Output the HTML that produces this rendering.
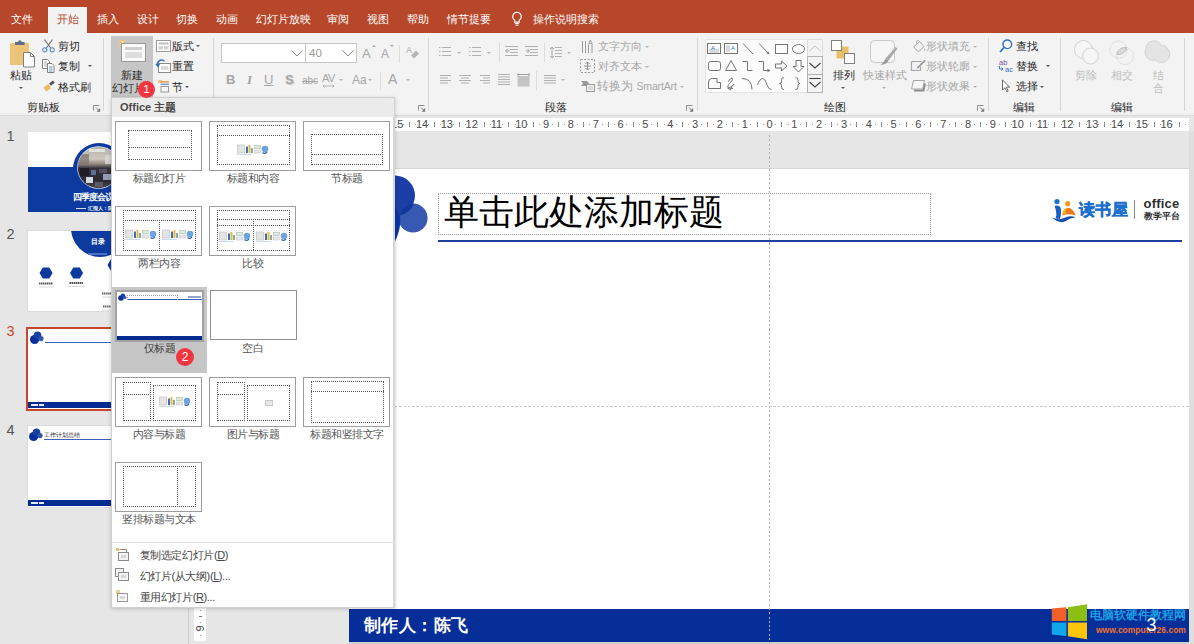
<!DOCTYPE html>
<html><head><meta charset="utf-8">
<style>
*{margin:0;padding:0;box-sizing:border-box}
html,body{width:1194px;height:644px;overflow:hidden;background:#e6e6e6}
body{position:relative;font-family:"Liberation Sans",sans-serif;font-size:11px;color:#262626}
.a{position:absolute}
.t{position:absolute;white-space:nowrap;font-size:11px;line-height:14px;height:14px;overflow:visible}
.j{text-align:justify;text-align-last:justify;text-justify:inter-character}
.g{color:#a6a6a6}
.w{color:#fff}
.sep{position:absolute;top:38px;height:73px;width:1px;background:#d6d6d6}
svg{position:absolute;overflow:visible}
.lb{position:absolute;white-space:nowrap;letter-spacing:-.6px;font-size:10.500px;line-height:14px;color:#444;text-align:center;width:96px}
.th{position:absolute;width:87px;height:50px;background:#fff;border:1px solid #a8a8a8}
.dz{position:absolute;border:1px dotted #555}
</style></head><body>
<!-- TITLE BAR -->
<div class="a" id="titlebar" style="left:0;top:0;width:1194px;height:33px;background:#b7472a"></div>
<div class="a" style="left:48px;top:7px;width:39px;height:27px;background:#f3f3f3"></div>
<!-- RIBBON -->
<div class="a" id="ribbon" style="left:0;top:33px;width:1194px;height:82px;background:#f3f3f3"></div>
<div class="a" style="left:0;top:113px;width:1194px;height:2px;background:#efefef"></div><div class="a" style="left:0;top:115px;width:1194px;height:1px;background:#dadada"></div>
<div class="t w j" style="left: 11px; top: 12px; width: 22.2px;">文件</div>
<div class="t j" style="left: 57px; top: 12px; color: rgb(183, 71, 42); width: 22.2px;">开始</div>
<div class="t w j" style="left: 97px; top: 12px; width: 22.2px;">插入</div>
<div class="t w j" style="left: 137px; top: 12px; width: 22.2px;">设计</div>
<div class="t w j" style="left: 176px; top: 12px; width: 22.2px;">切换</div>
<div class="t w j" style="left: 216px; top: 12px; width: 22.2px;">动画</div>
<div class="t w j" style="left: 256px; top: 12px; width: 55.2px;">幻灯片放映</div>
<div class="t w j" style="left: 327px; top: 12px; width: 22.2px;">审阅</div>
<div class="t w j" style="left: 367px; top: 12px; width: 22.2px;">视图</div>
<div class="t w j" style="left: 407px; top: 12px; width: 22.2px;">帮助</div>
<div class="t w j" style="left: 447px; top: 12px; width: 44.2px;">情节提要</div>
<svg style="left:511px;top:11px" width="12" height="16" viewBox="0 0 12 16"><path d="M6 1.2a4.3 4.3 0 0 0-2.3 7.9v2h4.6v-2A4.3 4.3 0 0 0 6 1.2z" fill="none" stroke="#fff" stroke-width="1.1"></path><path d="M4 12.6h4M4.5 14.2h3" stroke="#fff" stroke-width="1"></path></svg>
<div class="t w j" style="left: 533px; top: 12px; width: 66.2px;">操作说明搜索</div>

<svg style="left:9px;top:40px" width="28" height="28" viewBox="0 0 28 28"><rect x="1" y="3" width="19" height="22" rx="1" fill="#ebc478"></rect><path d="M6 3.500V2h3a1.800 1.800 0 0 1 3.600 0h3v3H6z" fill="#5e6e8a"></path><path d="M14.500 12.500h7l4 4v10.500h-11z" fill="#fff" stroke="#808080" stroke-width="1"></path><path d="M21.500 12.500v4h4" fill="none" stroke="#808080" stroke-width="1"></path></svg>
<div class="t j" style="left: 10px; top: 68px; width: 22.2px;">粘贴</div>
<div class="a" style="left:19.3px;top:87.2px;width:0;height:0;border-left:2.200px solid transparent;border-right:2.200px solid transparent;border-top:2.600px solid #555"></div>
<svg style="left:42px;top:39px" width="13" height="14" viewBox="0 0 13 14"><path d="M2.500 .5l6.500 9M10.500 .5l-6.500 9" stroke="#6e6e6e" stroke-width="1.100" fill="none"></path><circle cx="2.800" cy="10.800" r="2.100" fill="none" stroke="#5b90d2" stroke-width="1.100"></circle><circle cx="10.200" cy="10.800" r="2.100" fill="none" stroke="#5b90d2" stroke-width="1.100"></circle></svg>
<div class="t j" style="left: 58px; top: 39px; width: 22.2px;">剪切</div>
<svg style="left:42px;top:59px" width="13" height="14" viewBox="0 0 13 14"><path d="M.5 .5h5l2 2v7h-7z" fill="#fff" stroke="#808080"></path><path d="M2 3h3M2 5h4M2 7h4" stroke="#9a9a9a" stroke-width=".8"></path><path d="M5.500 4.500h4.500l2 2v7h-6.500z" fill="#fff" stroke="#808080"></path><path d="M7 8h3.500M7 10h3.500M7 12h3.500" stroke="#3f78c3" stroke-width=".8"></path></svg>
<div class="t j" style="left: 58px; top: 59px; width: 22.2px;">复制</div>
<div class="a" style="left:87.8px;top:65.2px;width:0;height:0;border-left:2.200px solid transparent;border-right:2.200px solid transparent;border-top:2.600px solid #555"></div>
<svg style="left:42px;top:79px" width="14" height="14" viewBox="0 0 14 14"><path d="M1.500 8.500l5-3.500 3 4-5.500 3.500z" fill="#ebb95e"></path><path d="M7 4.500l4-3 1.800 2.300-4 3z" fill="#555"></path><path d="M6.500 5l3 4" stroke="#fff" stroke-width=".8"></path></svg>
<div class="t j" style="left: 58px; top: 80px; width: 33.2px;">格式刷</div>
<div class="t j" style="left: 27px; top: 100px; width: 33.2px;">剪贴板</div>
<svg style="left:93px;top:104.500px" width="8" height="8" viewBox="0 0 8 8"><path d="M.5 5.500V.5H6.500" fill="none" stroke="#8c8c8c"></path><path d="M3 2.500l3 3" fill="none" stroke="#777" stroke-width="1"></path><path d="M7.200 3v3.700H3.500z" fill="#777"></path></svg>
<div class="sep" style="left:103px"></div>
<div class="a" style="left:111px;top:36px;width:42px;height:61px;background:#c6c6c6"></div>
<svg style="left:117.500px;top:38.500px" width="30" height="26" viewBox="0 0 30 26"><path d="M1 1h7v7H1z" fill="#e8c58a"></path><path d="M2 4.500h5M4.500 2v5" stroke="#fff6e0" stroke-width="1"></path><rect x="3.500" y="4.500" width="24" height="18" fill="#fafafa" stroke="#9a9a9a"></rect><rect x="7" y="8" width="17" height="3" fill="#cfcfcf"></rect><rect x="7" y="13" width="17" height="6" fill="#dedede"></rect></svg>
<div class="t j" style="left: 121px; top: 68px; width: 22.2px;">新建</div>
<div class="t j" style="left: 112px; top: 81px; width: 33.2px;">幻灯片</div>
<svg style="left:156px;top:40px" width="15" height="12" viewBox="0 0 15 12"><rect x=".5" y=".5" width="14" height="11" fill="#fff" stroke="#9a9a9a"></rect><rect x="2.500" y="2.500" width="10" height="2" fill="#bdbdbd"></rect><rect x="2.500" y="6" width="4.500" height="3.500" fill="#d4d4d4"></rect><rect x="8" y="6" width="4.500" height="3.500" fill="#d4d4d4"></rect></svg>
<div class="t j" style="left: 172px; top: 39px; width: 22.2px;">版式</div>
<div class="a" style="left:195.8px;top:45.2px;width:0;height:0;border-left:2.200px solid transparent;border-right:2.200px solid transparent;border-top:2.600px solid #555"></div>
<svg style="left:155px;top:59px" width="16" height="14" viewBox="0 0 16 14"><rect x="3.500" y="4.500" width="12" height="9" fill="#fff" stroke="#8a8a8a"></rect><rect x="6" y="7" width="7" height="4" fill="#d8d8d8"></rect><path d="M3 7.500A4.200 4.200 0 0 1 9.500 2.300" fill="none" stroke="#2f6fc0" stroke-width="1.500"></path><path d="M.3 5l2.700 3.200 2.300-3.400z" fill="#2f6fc0"></path></svg>
<div class="t j" style="left: 172px; top: 59px; width: 22.2px;">重置</div>
<svg style="left:158px;top:80px" width="12" height="13" viewBox="0 0 12 13"><rect x="0" y="0" width="4" height="3" fill="#f0c98a"></rect><rect x="2.500" y="1" width="8.500" height="1.600" fill="#f0a050"></rect><rect x="2.500" y="3.600" width="8.500" height="1.200" fill="#5b90d2"></rect><rect x="3" y="6.500" width="7.500" height="5.500" fill="#f8f8f8" stroke="#9a9a9a"></rect></svg>
<div class="t " style="left:172px;top:80px;">节</div>
<div class="a" style="left:184.8px;top:86.2px;width:0;height:0;border-left:2.200px solid transparent;border-right:2.200px solid transparent;border-top:2.600px solid #555"></div>
<div class="sep" style="left:213px"></div>
<div class="a" style="left:221px;top:43px;width:85px;height:20px;background:#fff;border:1px solid #c6c6c6"></div>
<div class="a" style="left:305px;top:43px;width:52px;height:20px;background:#fff;border:1px solid #c6c6c6"></div>
<svg style="left:291px;top:50px" width="12" height="7" viewBox="0 0 12 7"><path d="M.5 .5l5.500 5.500 5.500-5.500" fill="none" stroke="#8a8a8a" stroke-width="1"></path></svg>
<svg style="left:342px;top:50px" width="12" height="7" viewBox="0 0 12 7"><path d="M.5 .5l5.500 5.500 5.500-5.500" fill="none" stroke="#8a8a8a" stroke-width="1"></path></svg>
<div class="t " style="left:309px;top:46px;color:#999;font-size:11.500px">40</div>
<div class="t g" style="left:362px;top:47px;font-size:13px">A</div>
<div class="a" style="left:372px;top:45px;width:0;height:0;border-left:2px solid transparent;border-right:2px solid transparent;border-bottom:2.500px solid #a6a6a6"></div>
<div class="t g" style="left:381px;top:47px;font-size:12px">A</div>
<div class="a" style="left:390px;top:45px;width:0;height:0;border-left:2px solid transparent;border-right:2px solid transparent;border-top:2.500px solid #a6a6a6"></div>
<div class="a" style="left:399px;top:45px;width:1px;height:18px;background:#dcdcdc"></div>
<svg style="left:406px;top:45px" width="14" height="15" viewBox="0 0 14 15"><text x="0" y="8" font-size="9" font-family="Liberation Sans" fill="#a6a6a6">A</text><path d="M5 10.500l5-5 3 3-5 5z" fill="#b4b4b4"></path></svg>
<div class="t g" style="left:226px;top:73px;font-weight:bold;font-size:13px">B</div>
<div class="t g" style="left:247px;top:73px;font-style:italic;font-weight:bold;font-size:13px;font-family:'Liberation Serif',serif">I</div>
<div class="t g" style="left:264px;top:73px;font-size:13px;text-decoration:underline">U</div>
<div class="t g" style="left:285px;top:73px;font-weight:bold;font-size:13px;text-shadow:1px 1px 1px #ccc">S</div>
<div class="t g" style="left:302px;top:74px;font-size:10px;text-decoration:line-through">abc</div>
<div class="t g" style="left:322px;top:71px;font-size:11px;letter-spacing:-.5px">AV</div>
<svg style="left:322px;top:84px" width="13" height="4" viewBox="0 0 13 4"><path d="M1 2h11M2.500 .5L1 2l1.500 1.500M10.500 .5L12 2l-1.500 1.500" fill="none" stroke="#a6a6a6" stroke-width=".8"></path></svg>
<div class="a" style="left:338.8px;top:79.2px;width:0;height:0;border-left:2.200px solid transparent;border-right:2.200px solid transparent;border-top:2.600px solid #b4b4b4"></div>
<div class="t g" style="left:352px;top:73px;font-size:12px">Aa</div>
<div class="a" style="left:367.8px;top:79.2px;width:0;height:0;border-left:2.200px solid transparent;border-right:2.200px solid transparent;border-top:2.600px solid #b4b4b4"></div>
<div class="a" style="left:380px;top:72px;width:1px;height:18px;background:#dcdcdc"></div>
<div class="t g" style="left:388px;top:72px;font-size:14px">A</div>
<div class="a" style="left:405.8px;top:79.2px;width:0;height:0;border-left:2.200px solid transparent;border-right:2.200px solid transparent;border-top:2.600px solid #b4b4b4"></div>
<svg style="left:418px;top:104.500px" width="8" height="8" viewBox="0 0 8 8"><path d="M.5 5.500V.5H6.500" fill="none" stroke="#8c8c8c"></path><path d="M3 2.500l3 3" fill="none" stroke="#777" stroke-width="1"></path><path d="M7.200 3v3.700H3.500z" fill="#777"></path></svg>
<div class="sep" style="left:428px"></div>
<svg style="left:439px;top:46px" width="16" height="14" viewBox="0 0 16 14"><rect x="0" y="1" width="1.5" height="1" fill="#b0b0b0"></rect><rect x="3" y="1" width="9" height="1" fill="#b0b0b0"></rect><rect x="0" y="5" width="1.5" height="1" fill="#b0b0b0"></rect><rect x="3" y="5" width="9" height="1" fill="#b0b0b0"></rect><rect x="0" y="9" width="1.5" height="1" fill="#b0b0b0"></rect><rect x="3" y="9" width="9" height="1" fill="#b0b0b0"></rect></svg>
<div class="a" style="left:456.8px;top:52.2px;width:0;height:0;border-left:2.200px solid transparent;border-right:2.200px solid transparent;border-top:2.600px solid #b4b4b4"></div>
<svg style="left:469px;top:46px" width="16" height="14" viewBox="0 0 16 14"><rect x="0" y="1" width="1.5" height="1" fill="#b0b0b0"></rect><rect x="3" y="1" width="9" height="1" fill="#b0b0b0"></rect><rect x="0" y="5" width="1.5" height="1" fill="#b0b0b0"></rect><rect x="3" y="5" width="9" height="1" fill="#b0b0b0"></rect><rect x="0" y="9" width="1.5" height="1" fill="#b0b0b0"></rect><rect x="3" y="9" width="9" height="1" fill="#b0b0b0"></rect></svg>
<div class="a" style="left:486.8px;top:52.2px;width:0;height:0;border-left:2.200px solid transparent;border-right:2.200px solid transparent;border-top:2.600px solid #b4b4b4"></div>
<div class="a" style="left:499px;top:43px;width:1px;height:19px;background:#dcdcdc"></div>
<svg style="left:505px;top:46px" width="16" height="14" viewBox="0 0 16 14"><rect x="0" y="0" width="13" height="1" fill="#b0b0b0"></rect><rect x="5" y="3" width="8" height="1" fill="#b0b0b0"></rect><rect x="5" y="6" width="8" height="1" fill="#b0b0b0"></rect><rect x="0" y="9" width="13" height="1" fill="#b0b0b0"></rect></svg>
<svg style="left:505px;top:48px" width="5" height="6" viewBox="0 0 5 6"><path d="M4.500 3H.8M2.500 1L.5 3l2 2" fill="none" stroke="#a6a6a6"></path></svg>
<svg style="left:525px;top:46px" width="16" height="14" viewBox="0 0 16 14"><rect x="0" y="0" width="13" height="1" fill="#b0b0b0"></rect><rect x="5" y="3" width="8" height="1" fill="#b0b0b0"></rect><rect x="5" y="6" width="8" height="1" fill="#b0b0b0"></rect><rect x="0" y="9" width="13" height="1" fill="#b0b0b0"></rect></svg>
<svg style="left:525px;top:48px" width="5" height="6" viewBox="0 0 5 6"><path d="M.5 3h3.700M2.500 1l2 2-2 2" fill="none" stroke="#a6a6a6"></path></svg>
<div class="a" style="left:544px;top:43px;width:1px;height:19px;background:#dcdcdc"></div>
<svg style="left:555px;top:47px" width="16" height="14" viewBox="0 0 16 14"><rect x="0" y="0" width="7" height="1" fill="#b0b0b0"></rect><rect x="0" y="3" width="7" height="1" fill="#b0b0b0"></rect><rect x="0" y="6" width="7" height="1" fill="#b0b0b0"></rect><rect x="0" y="9" width="7" height="1" fill="#b0b0b0"></rect></svg>
<svg style="left:549px;top:46px" width="6" height="13" viewBox="0 0 6 13"><path d="M3 1v11M1 3l2-2 2 2M1 10l2 2 2-2" fill="none" stroke="#a6a6a6"></path></svg>
<div class="a" style="left:566.8px;top:52.2px;width:0;height:0;border-left:2.200px solid transparent;border-right:2.200px solid transparent;border-top:2.600px solid #b4b4b4"></div>
<svg style="left:440px;top:75px" width="16" height="14" viewBox="0 0 16 14"><rect x="0" y="0" width="11" height="1" fill="#b0b0b0"></rect><rect x="0" y="2.5" width="8" height="1" fill="#b0b0b0"></rect><rect x="0" y="5" width="11" height="1" fill="#b0b0b0"></rect><rect x="0" y="7.5" width="8" height="1" fill="#b0b0b0"></rect></svg>
<svg style="left:459px;top:75px" width="16" height="14" viewBox="0 0 16 14"><rect x="0" y="0" width="12" height="1" fill="#b0b0b0"></rect><rect x="2" y="2.5" width="8" height="1" fill="#b0b0b0"></rect><rect x="0" y="5" width="12" height="1" fill="#b0b0b0"></rect><rect x="2" y="7.5" width="8" height="1" fill="#b0b0b0"></rect></svg>
<svg style="left:480px;top:75px" width="16" height="14" viewBox="0 0 16 14"><rect x="0" y="0" width="10" height="1" fill="#b0b0b0"></rect><rect x="3" y="2.5" width="7" height="1" fill="#b0b0b0"></rect><rect x="0" y="5" width="10" height="1" fill="#b0b0b0"></rect><rect x="3" y="7.5" width="7" height="1" fill="#b0b0b0"></rect></svg>
<svg style="left:498px;top:74px" width="16" height="14" viewBox="0 0 16 14"><rect x="0" y="0" width="12" height="1" fill="#b0b0b0"></rect><rect x="0" y="2.5" width="12" height="1" fill="#b0b0b0"></rect><rect x="0" y="5" width="12" height="1" fill="#b0b0b0"></rect><rect x="0" y="7.5" width="12" height="1" fill="#b0b0b0"></rect><rect x="0" y="10" width="12" height="1" fill="#b0b0b0"></rect></svg>
<svg style="left:517px;top:73px" width="13" height="14" viewBox="0 0 13 14"><rect x=".5" y="3" width="12" height="10.500" fill="#c4c4c4"></rect><path d="M1 1.500h11M1 0v3M12 0v3" stroke="#999" stroke-width=".9"></path></svg>
<div class="a" style="left:536px;top:71px;width:1px;height:19px;background:#dcdcdc"></div>
<svg style="left:544px;top:75px" width="16" height="14" viewBox="0 0 16 14"><rect x="0" y="0" width="12" height="1" fill="#b0b0b0"></rect><rect x="0" y="2.5" width="12" height="1" fill="#b0b0b0"></rect><rect x="0" y="5" width="12" height="1" fill="#b0b0b0"></rect><rect x="0" y="7.5" width="12" height="1" fill="#b0b0b0"></rect></svg>
<div class="a" style="left:560.8px;top:79.2px;width:0;height:0;border-left:2.200px solid transparent;border-right:2.200px solid transparent;border-top:2.600px solid #b4b4b4"></div>
<svg style="left:581px;top:39px" width="14" height="15" viewBox="0 0 14 15"><path d="M1.500 2v12M4.500 2v12M7.500 6v8M11 6v8" stroke="#9a9a9a" stroke-width="1"></path><text x="7" y="6" font-size="7" font-family="Liberation Sans" fill="#8a8a8a">A</text></svg>
<div class="t g j" style="left: 598px; top: 39px; width: 44.2px;">文字方向</div>
<div class="a" style="left:644.8px;top:46.2px;width:0;height:0;border-left:2.200px solid transparent;border-right:2.200px solid transparent;border-top:2.600px solid #b4b4b4"></div>
<svg style="left:580px;top:59px" width="15" height="15" viewBox="0 0 15 15"><rect x=".5" y=".5" width="14" height="13" fill="none" stroke="#9a9a9a" stroke-dasharray="2 1.500"></rect><path d="M7.500 3v8M5.500 5l2-2 2 2M5.500 9l2 2 2-2M4 7h7" fill="none" stroke="#8a8a8a" stroke-width=".9"></path></svg>
<div class="t g j" style="left: 598px; top: 59px; width: 44.2px;">对齐文本</div>
<div class="a" style="left:644.8px;top:66.2px;width:0;height:0;border-left:2.200px solid transparent;border-right:2.200px solid transparent;border-top:2.600px solid #b4b4b4"></div>
<svg style="left:580px;top:79px" width="16" height="14" viewBox="0 0 16 14"><path d="M1 2h6l2 2.500-2 2.500H1l2-2.500z" fill="#9a9a9a"></path><rect x="6.500" y="5.500" width="8" height="7" fill="#f3f3f3" stroke="#9a9a9a"></rect><path d="M8 8h5M8 10h5" stroke="#b4b4b4" stroke-width=".8"></path></svg>
<div class="t g j" style="left: 597px; top: 79px; font-size: 11.5px; width: 79.7px;">转换为 <span style="font-size:10.500px;letter-spacing:-.15px">SmartArt</span></div>
<div class="a" style="left:679.8px;top:86.2px;width:0;height:0;border-left:2.200px solid transparent;border-right:2.200px solid transparent;border-top:2.600px solid #b4b4b4"></div>
<div class="t j" style="left: 545px; top: 100px; width: 22.2px;">段落</div>
<svg style="left:686px;top:104.500px" width="8" height="8" viewBox="0 0 8 8"><path d="M.5 5.500V.5H6.500" fill="none" stroke="#8c8c8c"></path><path d="M3 2.500l3 3" fill="none" stroke="#777" stroke-width="1"></path><path d="M7.200 3v3.700H3.500z" fill="#777"></path></svg>
<div class="sep" style="left:697px"></div>
<div class="a" style="left:705px;top:39px;width:118px;height:54px;background:#fcfcfc;border:1px solid #e4e4e4"></div>
<div class="a" style="left:807px;top:39px;width:16px;height:18px;border:1px solid #dcdcdc;background:#f3f3f3"></div><div class="a" style="left:807px;top:56px;width:16px;height:19px;border:1px solid #b4b4b4;background:#f3f3f3"></div><div class="a" style="left:807px;top:74px;width:16px;height:19px;border:1px solid #b4b4b4;background:#f3f3f3"></div><svg style="left:809px;top:43px" width="12" height="48" viewBox="0 0 12 48"><path d="M.5 8l5.500-5 5.500 5" fill="none" stroke="#c4c4c4" stroke-width="1"></path><path d="M.5 20l5.500 5 5.500-5" fill="none" stroke="#444" stroke-width="1.100"></path><path d="M.3 35.500h11.400" stroke="#444" stroke-width="1.100"></path><path d="M.5 39l5.500 5 5.500-5" fill="none" stroke="#444" stroke-width="1.100"></path></svg>
<svg style="left:705px;top:39px" width="102" height="54" viewBox="705 39 102 54" fill="none" stroke="#6e6e6e" stroke-width=".95">
<rect x="707.500" y="43.500" width="13" height="10" fill="#fff"></rect><path d="M709 50h10M709 52h10" stroke="#999" stroke-width=".7"></path><text x="711" y="49.500" font-size="6" font-family="Liberation Sans" fill="#2f6fc0" stroke="none">A</text>
<rect x="724.500" y="43.500" width="13" height="10" fill="#fff"></rect><path d="M727 45v7M729 45v7" stroke="#999" stroke-width=".7"></path><text x="731" y="50" font-size="6" font-family="Liberation Sans" fill="#2f6fc0" stroke="none">A</text>
<path d="M743 43.500l10 10.500"></path>
<path d="M759 43.500l10 10.500"></path><path d="M769.500 54.500l-3.300-1.200 2.200-2z" fill="#6e6e6e" stroke="none"></path>
<rect x="775.500" y="44.500" width="12" height="9"></rect>
<ellipse cx="798.500" cy="49" rx="6" ry="4.500"></ellipse>
<rect x="708.500" y="61.500" width="12" height="9" rx="2"></rect>
<path d="M731 60.500l5.500 10h-11z"></path>
<path d="M742.500 61.500h5v9h5"></path>
<path d="M758.500 61.500h5v9h5"></path><path d="M770.500 70.500l-3-1.800v3.600z" fill="#6e6e6e" stroke="none"></path>
<path d="M775.500 64h6v-3l5.500 5-5.500 5v-3h-6z"></path>
<path d="M796 60.500h5v6h3l-5.500 5.500-5.500-5.500h3z"></path>
<path d="M708.500 88.500v-6.500q0-3.500 3.500-3.500h5v4h3.500v6z"></path>
<path d="M728 82q2-4 4-4 2 .5-2 5t-1 4.500q2 .5 5-3.500-3 3-3.500 6l-3-2 5.500.5" stroke-width=".9"></path>
<path d="M742 78.500q10 0 10 11"></path>
<path d="M757.500 85q2.500-6.500 5-6.500 2.500 0 4.500 6.500 1.500 4.500 4.500 4.500"></path>
<path d="M784 77.500q-2.500 0-2.500 2.500v1.500q0 2-2 2 2 0 2 2v1.500q0 2.500 2.500 2.500"></path>
<path d="M795.500 77.500q2.500 0 2.500 2.500v1.500q0 2 2 2-2 0-2 2v1.500q0 2.500-2.500 2.500"></path>
</svg>
<svg style="left:830px;top:39px" width="26" height="26" viewBox="0 0 26 26"><rect x="6.500" y="7.500" width="12" height="12" fill="#ebbf6a"></rect><rect x="1.500" y="1.500" width="10" height="10" fill="#fff" stroke="#808080"></rect><rect x="14.500" y="14.500" width="10" height="10" fill="#fff" stroke="#808080"></rect></svg>
<div class="t j" style="left: 833px; top: 68px; width: 22.2px;">排列</div>
<div class="a" style="left:841.3px;top:87.2px;width:0;height:0;border-left:2.200px solid transparent;border-right:2.200px solid transparent;border-top:2.600px solid #555"></div>
<svg style="left:868px;top:39px" width="32" height="28" viewBox="0 0 32 28"><rect x="2.500" y="1.500" width="24" height="22" rx="4" fill="#f6f6f6" stroke="#c8c8c8"></rect><path d="M27.500 8l2 1.500-9 12-3-2z" fill="#a9a9a9"></path><path d="M17.500 19.500l3 2q-2 4-8 4.500 4-3 5-6.500z" fill="#9a9a9a"></path></svg>
<div class="t g j" style="left: 863px; top: 68px; width: 44.2px;">快速样式</div>
<div class="a" style="left:882.3px;top:87.2px;width:0;height:0;border-left:2.200px solid transparent;border-right:2.200px solid transparent;border-top:2.600px solid #b4b4b4"></div>
<svg style="left:912px;top:39px" width="14" height="14" viewBox="0 0 14 14"><path d="M2.500 7l5-4.500 4.500 5-4.500 4.500q-1 1-2 0l-3-3q-1-1 0-2z" fill="#f3f3f3" stroke="#a6a6a6"></path><path d="M7.500 2.500q-3-3-3 2" fill="none" stroke="#a6a6a6"></path><path d="M12.500 9q1.500 2 0 3-1.500-1 0-3z" fill="#b4b4b4"></path></svg>
<div class="t g j" style="left: 926px; top: 39px; width: 44.2px;">形状填充</div>
<div class="a" style="left:972.8px;top:46.2px;width:0;height:0;border-left:2.200px solid transparent;border-right:2.200px solid transparent;border-top:2.600px solid #b4b4b4"></div>
<svg style="left:910px;top:59px" width="16" height="14" viewBox="0 0 16 14"><path d="M1.500 2.500h10M1.500 2.500v9h9v-4" fill="none" stroke="#a6a6a6" stroke-width="1.200"></path><path d="M14.500 .8l1.200 1.200-7 7-2.200 1 1-2.200z" fill="#9a9a9a"></path></svg>
<div class="t g j" style="left: 926px; top: 59px; width: 44.2px;">形状轮廓</div>
<div class="a" style="left:972.8px;top:66.2px;width:0;height:0;border-left:2.200px solid transparent;border-right:2.200px solid transparent;border-top:2.600px solid #b4b4b4"></div>
<svg style="left:910px;top:79px" width="16" height="14" viewBox="0 0 16 14"><path d="M4 11.500h9.500l1.500-7" fill="none" stroke="#8a8a8a" stroke-width="2"></path><path d="M3.500 1.500h11l-2 8.500h-11z" fill="#f6f6f6" stroke="#a6a6a6"></path></svg>
<div class="t g j" style="left: 926px; top: 79px; width: 44.2px;">形状效果</div>
<div class="a" style="left:972.8px;top:86.2px;width:0;height:0;border-left:2.200px solid transparent;border-right:2.200px solid transparent;border-top:2.600px solid #b4b4b4"></div>
<div class="t j" style="left: 824px; top: 100px; width: 22.2px;">绘图</div>
<svg style="left:977px;top:104.500px" width="8" height="8" viewBox="0 0 8 8"><path d="M.5 5.500V.5H6.500" fill="none" stroke="#8c8c8c"></path><path d="M3 2.500l3 3" fill="none" stroke="#777" stroke-width="1"></path><path d="M7.200 3v3.700H3.500z" fill="#777"></path></svg>
<div class="sep" style="left:988px"></div>
<svg style="left:999px;top:39px" width="14" height="14" viewBox="0 0 14 14"><circle cx="8.300" cy="5.300" r="4.300" fill="#fff" stroke="#2f6fc0" stroke-width="1.400"></circle><path d="M5 8.500l-4 4.500" stroke="#2f6fc0" stroke-width="1.800"></path></svg>
<div class="t j" style="left: 1016px; top: 39px; width: 22.2px;">查找</div>
<svg style="left:998px;top:58px" width="16" height="16" viewBox="0 0 16 16"><text x="1" y="6.500" font-size="7.500" font-family="Liberation Sans" fill="#7a4fa8" stroke="none">ab</text><text x="7" y="14" font-size="7.500" font-family="Liberation Sans" fill="#2f6fc0" stroke="none">ac</text><path d="M1.500 8v3h3.500M3.500 9.500l1.700 1.500-1.700 1.500" fill="none" stroke="#2f6fc0" stroke-width=".9"></path></svg>
<div class="t j" style="left: 1016px; top: 59px; width: 22.2px;">替换</div>
<div class="a" style="left:1046.3px;top:65.2px;width:0;height:0;border-left:2.200px solid transparent;border-right:2.200px solid transparent;border-top:2.600px solid #555"></div>
<svg style="left:1001px;top:79px" width="10" height="14" viewBox="0 0 10 14"><path d="M1.500 1v10l2.500-2.300 1.800 4 1.400-.6-1.800-4h3.300z" fill="#fff" stroke="#5a5a5a" stroke-width=".9"></path></svg>
<div class="t j" style="left: 1016px; top: 79px; width: 22.2px;">选择</div>
<div class="a" style="left:1039.8px;top:86.2px;width:0;height:0;border-left:2.200px solid transparent;border-right:2.200px solid transparent;border-top:2.600px solid #555"></div>
<div class="t j" style="left: 1013px; top: 100px; width: 22.2px;">编辑</div>
<div class="sep" style="left:1060px"></div>
<svg style="left:1073px;top:39px" width="28" height="28" viewBox="0 0 28 28"><circle cx="10.500" cy="10.500" r="9" fill="#f6f6f6" stroke="#d2d2d2"></circle><circle cx="17.500" cy="17" r="8" fill="#f6f6f6" stroke="#d2d2d2"></circle></svg>
<svg style="left:1108px;top:39px" width="28" height="28" viewBox="0 0 28 28"><circle cx="10.500" cy="10.500" r="8.500" fill="none" stroke="#d2d2d2" stroke-dasharray="1.500 1"></circle><circle cx="17" cy="17" r="8.500" fill="none" stroke="#d2d2d2" stroke-dasharray="1.500 1"></circle><path d="M8.600 15.200A8.500 8.500 0 0 1 18.800 8.700 8.500 8.500 0 0 1 8.600 15.200z" fill="#dcdcdc" stroke="#bdbdbd"></path></svg>
<svg style="left:1144px;top:39px" width="30" height="28" viewBox="0 0 30 28"><path d="M2 9.500a8 8 0 0 1 15.200-3 8.500 8.500 0 1 1-6 14.500A8 8 0 0 1 2 9.500z" fill="#e4e4e4" stroke="#d2d2d2"></path></svg>
<div class="t g j" style="left: 1075px; top: 68px; color: rgb(189, 189, 189); width: 22.2px;">剪除</div>
<div class="t g j" style="left: 1111px; top: 68px; color: rgb(189, 189, 189); width: 22.2px;">相交</div>
<div class="t g" style="left:1153px;top:68px;color:#bdbdbd">结</div>
<div class="t g" style="left:1153px;top:81px;color:#bdbdbd">合</div>
<div class="t j" style="left: 1111px; top: 100px; width: 22.2px;">编辑</div>
<div class="sep" style="left:1184px"></div>
<!-- WORKSPACE -->
<div class="t" style="left:4px;top:127.5px;width:13px;text-align:center;font-size:14.500px;line-height:17px;height:17px;color:#555">1</div>
<div class="t" style="left:4px;top:225.5px;width:13px;text-align:center;font-size:14.500px;line-height:17px;height:17px;color:#555">2</div>
<div class="t" style="left:4px;top:323.0px;width:13px;text-align:center;font-size:14.500px;line-height:17px;height:17px;color:#c8472c">3</div>
<div class="t" style="left:4px;top:421.5px;width:13px;text-align:center;font-size:14.500px;line-height:17px;height:17px;color:#555">4</div>
<div class="a" style="left:28px;top:132px;width:142px;height:80px;background:#fff;overflow:hidden"><div class="a" style="left:0;top:35px;width:142px;height:45px;background:#0c3a9e"></div><div class="a" style="left:45px;top:11px;width:52px;height:52px;border-radius:26px;background:#0c3a9e"></div><svg style="left:49px;top:14px" width="43" height="43" viewBox="0 0 43 43"><defs><clipPath id="pc"><circle cx="21.500" cy="21.500" r="20.700"></circle></clipPath><linearGradient id="pg" x1="0" y1="0" x2="0" y2="1"><stop offset="0" stop-color="#b5aea4"></stop><stop offset=".3" stop-color="#cdc7be"></stop><stop offset=".42" stop-color="#8f877f"></stop><stop offset=".52" stop-color="#33323a"></stop><stop offset=".8" stop-color="#2b2a33"></stop><stop offset="1" stop-color="#4b4852"></stop></linearGradient></defs><circle cx="21.500" cy="21.500" r="21.300" fill="#e6e9f2"></circle><g clip-path="url(#pc)"><rect width="43" height="43" fill="url(#pg)"></rect><rect x="0" y="8" width="12" height="10" fill="#7a7068" opacity=".7"></rect><rect x="12" y="3" width="16" height="3" fill="#efede8" opacity=".8"></rect><rect x="28" y="9" width="15" height="9" fill="#dcdad6" opacity=".8"></rect><rect x="3" y="22" width="9" height="8" fill="#1e1d24"></rect><rect x="14" y="24" width="5" height="5" fill="#6a7fae" opacity=".8"></rect><rect x="22" y="23" width="8" height="4" fill="#55505a"></rect><rect x="9" y="31" width="7" height="6" fill="#e9ebf2" opacity=".9"></rect><rect x="26" y="28" width="8" height="6" fill="#aeb9d6" opacity=".8"></rect><rect x="18" y="36" width="8" height="5" fill="#5c5a66"></rect></g></svg><div class="t w j" style="left: 44.5px; top: 58.5px; font-size: 9px; line-height: 12px; height: 12px; font-weight: bold; letter-spacing: -1px; width: 56.2px;">四季度会议纪要</div><div class="a" style="left:48px;top:76px;width:10px;height:1px;background:#cfd8f0"></div><div class="t w j" style="left: 59.5px; top: 72.5px; font-size: 5px; line-height: 7px; height: 7px; font-weight: bold; width: 30.2px;">汇报人：陈飞</div></div>
<div class="a" style="left:28px;top:230.500px;width:142px;height:80.500px;background:#fff;overflow:hidden;box-shadow:0 0 0 1px #dcdcdc"><div class="a" style="left:43px;top:-31.500px;width:58px;height:58px;border-radius:29px;background:#0c3a9e"></div><div class="t w j" style="left: 63px; top: 6px; font-size: 7px; line-height: 9px; height: 9px; font-weight: bold; width: 14.2px;">目录</div><div class="a" style="left:60px;top:22.500px;width:19px;height:1.500px;background:#4f6fc0"></div><svg style="left:0;top:0" width="142" height="80" viewBox="0 0 142 80"><path d="M11.500 42l3.300-5.600h6.500l3.300 5.600-3.300 5.600h-6.500z M42 42l3.300-5.600h6.500l3.300 5.600-3.300 5.600h-6.500z M79.500 34l3.300-5.600h6.500l3.300 5.600-3.300 5.600h-6.500z" fill="#0c3a9e"></path><path d="M11 52.500h14M41.500 52h14" stroke="#555" stroke-width="2" stroke-dasharray="1.500 .5"></path><path d="M11 56h14M39.500 55.500h17M74 66h10M74 79h10" stroke="#c8c8c8" stroke-width=".7"></path><path d="M74 62.500h9M75 75.500h8" stroke="#666" stroke-width="2" stroke-dasharray="1.500 .5"></path></svg></div>
<div class="a" style="left:25.500px;top:326.500px;width:147px;height:84px;background:#fff;border:2px solid #c8472c;overflow:hidden"><svg style="left:2px;top:2px" width="14" height="14" viewBox="0 0 14 14"><circle cx="4.600" cy="8.500" r="4.600" fill="#0b2f9a"></circle><circle cx="7.500" cy="4.200" r="3.800" fill="#1a3fa3"></circle><circle cx="11" cy="7.600" r="2.600" fill="#3457ad"></circle></svg><div class="a" style="left:17px;top:13px;width:126px;height:1px;background:#3c5fb8"></div><div class="a" style="left:0;top:73.500px;width:143px;height:6px;background:#032b91"></div><div class="a" style="left:3px;top:75.500px;width:7px;height:2px;background:#e6ebf8"></div><div class="a" style="left:11px;top:75.500px;width:5px;height:2px;background:#e6ebf8"></div></div>
<div class="a" style="left:28px;top:426px;width:142px;height:81px;background:#fff;overflow:hidden;box-shadow:0 0 0 1px #dcdcdc"><svg style="left:0.500px;top:1.500px" width="14" height="14" viewBox="0 0 14 14"><circle cx="4.600" cy="8.500" r="4.600" fill="#0b2f9a"></circle><circle cx="7.500" cy="4.200" r="3.800" fill="#1a3fa3"></circle><circle cx="11" cy="7.600" r="2.600" fill="#3457ad"></circle></svg><div class="t j" style="left: 16px; top: 4.5px; font-size: 6px; line-height: 8px; height: 8px; color: rgb(34, 34, 34); width: 36.2px;">工作计划总结</div><div class="a" style="left:16px;top:12.500px;width:126px;height:1px;background:#3c5fb8"></div><div class="a" style="left:0;top:74px;width:142px;height:6px;background:#032b91"></div><div class="a" style="left:3px;top:76px;width:7px;height:2px;background:#e6ebf8"></div><div class="a" style="left:11px;top:76px;width:5px;height:2px;background:#e6ebf8"></div></div>
<!-- horizontal ruler -->
<div class="a" style="left:190px;top:116px;width:1004px;height:15px;background:#e6e6e6"></div>
<div class="a" id="hruler" style="left:349px;top:118px;width:840px;height:13px;background:#fff"></div>
<div class="t" style="left:362.4px;top:118px;width:20px;text-align:center;font-size:11px;line-height:13px;height:13px;color:#4a4a4a">16</div>
<div class="a" style="left:384.3px;top:122px;width:1px;height:5px;background:#8a8a8a"></div>
<div class="a" style="left:378.1px;top:124px;width:1px;height:1px;background:#9a9a9a"></div>
<div class="a" style="left:390.5px;top:124px;width:1px;height:1px;background:#9a9a9a"></div>
<div class="t" style="left:387.2px;top:118px;width:20px;text-align:center;font-size:11px;line-height:13px;height:13px;color:#4a4a4a">15</div>
<div class="a" style="left:409.1px;top:122px;width:1px;height:5px;background:#8a8a8a"></div>
<div class="a" style="left:402.9px;top:124px;width:1px;height:1px;background:#9a9a9a"></div>
<div class="a" style="left:415.3px;top:124px;width:1px;height:1px;background:#9a9a9a"></div>
<div class="t" style="left:412.0px;top:118px;width:20px;text-align:center;font-size:11px;line-height:13px;height:13px;color:#4a4a4a">14</div>
<div class="a" style="left:433.9px;top:122px;width:1px;height:5px;background:#8a8a8a"></div>
<div class="a" style="left:427.7px;top:124px;width:1px;height:1px;background:#9a9a9a"></div>
<div class="a" style="left:440.1px;top:124px;width:1px;height:1px;background:#9a9a9a"></div>
<div class="t" style="left:436.8px;top:118px;width:20px;text-align:center;font-size:11px;line-height:13px;height:13px;color:#4a4a4a">13</div>
<div class="a" style="left:458.8px;top:122px;width:1px;height:5px;background:#8a8a8a"></div>
<div class="a" style="left:452.5px;top:124px;width:1px;height:1px;background:#9a9a9a"></div>
<div class="a" style="left:465.0px;top:124px;width:1px;height:1px;background:#9a9a9a"></div>
<div class="t" style="left:461.7px;top:118px;width:20px;text-align:center;font-size:11px;line-height:13px;height:13px;color:#4a4a4a">12</div>
<div class="a" style="left:483.6px;top:122px;width:1px;height:5px;background:#8a8a8a"></div>
<div class="a" style="left:477.4px;top:124px;width:1px;height:1px;background:#9a9a9a"></div>
<div class="a" style="left:489.8px;top:124px;width:1px;height:1px;background:#9a9a9a"></div>
<div class="t" style="left:486.5px;top:118px;width:20px;text-align:center;font-size:11px;line-height:13px;height:13px;color:#4a4a4a">11</div>
<div class="a" style="left:508.4px;top:122px;width:1px;height:5px;background:#8a8a8a"></div>
<div class="a" style="left:502.2px;top:124px;width:1px;height:1px;background:#9a9a9a"></div>
<div class="a" style="left:514.6px;top:124px;width:1px;height:1px;background:#9a9a9a"></div>
<div class="t" style="left:511.3px;top:118px;width:20px;text-align:center;font-size:11px;line-height:13px;height:13px;color:#4a4a4a">10</div>
<div class="a" style="left:533.2px;top:122px;width:1px;height:5px;background:#8a8a8a"></div>
<div class="a" style="left:527.0px;top:124px;width:1px;height:1px;background:#9a9a9a"></div>
<div class="a" style="left:539.4px;top:124px;width:1px;height:1px;background:#9a9a9a"></div>
<div class="t" style="left:536.1px;top:118px;width:20px;text-align:center;font-size:11px;line-height:13px;height:13px;color:#4a4a4a">9</div>
<div class="a" style="left:558.0px;top:122px;width:1px;height:5px;background:#8a8a8a"></div>
<div class="a" style="left:551.8px;top:124px;width:1px;height:1px;background:#9a9a9a"></div>
<div class="a" style="left:564.2px;top:124px;width:1px;height:1px;background:#9a9a9a"></div>
<div class="t" style="left:560.9px;top:118px;width:20px;text-align:center;font-size:11px;line-height:13px;height:13px;color:#4a4a4a">8</div>
<div class="a" style="left:582.9px;top:122px;width:1px;height:5px;background:#8a8a8a"></div>
<div class="a" style="left:576.6px;top:124px;width:1px;height:1px;background:#9a9a9a"></div>
<div class="a" style="left:589.1px;top:124px;width:1px;height:1px;background:#9a9a9a"></div>
<div class="t" style="left:585.8px;top:118px;width:20px;text-align:center;font-size:11px;line-height:13px;height:13px;color:#4a4a4a">7</div>
<div class="a" style="left:607.7px;top:122px;width:1px;height:5px;background:#8a8a8a"></div>
<div class="a" style="left:601.5px;top:124px;width:1px;height:1px;background:#9a9a9a"></div>
<div class="a" style="left:613.9px;top:124px;width:1px;height:1px;background:#9a9a9a"></div>
<div class="t" style="left:610.6px;top:118px;width:20px;text-align:center;font-size:11px;line-height:13px;height:13px;color:#4a4a4a">6</div>
<div class="a" style="left:632.5px;top:122px;width:1px;height:5px;background:#8a8a8a"></div>
<div class="a" style="left:626.3px;top:124px;width:1px;height:1px;background:#9a9a9a"></div>
<div class="a" style="left:638.7px;top:124px;width:1px;height:1px;background:#9a9a9a"></div>
<div class="t" style="left:635.4px;top:118px;width:20px;text-align:center;font-size:11px;line-height:13px;height:13px;color:#4a4a4a">5</div>
<div class="a" style="left:657.3px;top:122px;width:1px;height:5px;background:#8a8a8a"></div>
<div class="a" style="left:651.1px;top:124px;width:1px;height:1px;background:#9a9a9a"></div>
<div class="a" style="left:663.5px;top:124px;width:1px;height:1px;background:#9a9a9a"></div>
<div class="t" style="left:660.2px;top:118px;width:20px;text-align:center;font-size:11px;line-height:13px;height:13px;color:#4a4a4a">4</div>
<div class="a" style="left:682.1px;top:122px;width:1px;height:5px;background:#8a8a8a"></div>
<div class="a" style="left:675.9px;top:124px;width:1px;height:1px;background:#9a9a9a"></div>
<div class="a" style="left:688.3px;top:124px;width:1px;height:1px;background:#9a9a9a"></div>
<div class="t" style="left:685.0px;top:118px;width:20px;text-align:center;font-size:11px;line-height:13px;height:13px;color:#4a4a4a">3</div>
<div class="a" style="left:706.9px;top:122px;width:1px;height:5px;background:#8a8a8a"></div>
<div class="a" style="left:700.7px;top:124px;width:1px;height:1px;background:#9a9a9a"></div>
<div class="a" style="left:713.2px;top:124px;width:1px;height:1px;background:#9a9a9a"></div>
<div class="t" style="left:709.9px;top:118px;width:20px;text-align:center;font-size:11px;line-height:13px;height:13px;color:#4a4a4a">2</div>
<div class="a" style="left:731.8px;top:122px;width:1px;height:5px;background:#8a8a8a"></div>
<div class="a" style="left:725.6px;top:124px;width:1px;height:1px;background:#9a9a9a"></div>
<div class="a" style="left:738.0px;top:124px;width:1px;height:1px;background:#9a9a9a"></div>
<div class="t" style="left:734.7px;top:118px;width:20px;text-align:center;font-size:11px;line-height:13px;height:13px;color:#4a4a4a">1</div>
<div class="a" style="left:756.6px;top:122px;width:1px;height:5px;background:#8a8a8a"></div>
<div class="a" style="left:750.4px;top:124px;width:1px;height:1px;background:#9a9a9a"></div>
<div class="a" style="left:762.8px;top:124px;width:1px;height:1px;background:#9a9a9a"></div>
<div class="t" style="left:759.5px;top:118px;width:20px;text-align:center;font-size:11px;line-height:13px;height:13px;color:#4a4a4a">0</div>
<div class="a" style="left:781.4px;top:122px;width:1px;height:5px;background:#8a8a8a"></div>
<div class="a" style="left:775.2px;top:124px;width:1px;height:1px;background:#9a9a9a"></div>
<div class="a" style="left:787.6px;top:124px;width:1px;height:1px;background:#9a9a9a"></div>
<div class="t" style="left:784.3px;top:118px;width:20px;text-align:center;font-size:11px;line-height:13px;height:13px;color:#4a4a4a">1</div>
<div class="a" style="left:806.2px;top:122px;width:1px;height:5px;background:#8a8a8a"></div>
<div class="a" style="left:800.0px;top:124px;width:1px;height:1px;background:#9a9a9a"></div>
<div class="a" style="left:812.4px;top:124px;width:1px;height:1px;background:#9a9a9a"></div>
<div class="t" style="left:809.1px;top:118px;width:20px;text-align:center;font-size:11px;line-height:13px;height:13px;color:#4a4a4a">2</div>
<div class="a" style="left:831.0px;top:122px;width:1px;height:5px;background:#8a8a8a"></div>
<div class="a" style="left:824.8px;top:124px;width:1px;height:1px;background:#9a9a9a"></div>
<div class="a" style="left:837.3px;top:124px;width:1px;height:1px;background:#9a9a9a"></div>
<div class="t" style="left:834.0px;top:118px;width:20px;text-align:center;font-size:11px;line-height:13px;height:13px;color:#4a4a4a">3</div>
<div class="a" style="left:855.9px;top:122px;width:1px;height:5px;background:#8a8a8a"></div>
<div class="a" style="left:849.7px;top:124px;width:1px;height:1px;background:#9a9a9a"></div>
<div class="a" style="left:862.1px;top:124px;width:1px;height:1px;background:#9a9a9a"></div>
<div class="t" style="left:858.8px;top:118px;width:20px;text-align:center;font-size:11px;line-height:13px;height:13px;color:#4a4a4a">4</div>
<div class="a" style="left:880.7px;top:122px;width:1px;height:5px;background:#8a8a8a"></div>
<div class="a" style="left:874.5px;top:124px;width:1px;height:1px;background:#9a9a9a"></div>
<div class="a" style="left:886.9px;top:124px;width:1px;height:1px;background:#9a9a9a"></div>
<div class="t" style="left:883.6px;top:118px;width:20px;text-align:center;font-size:11px;line-height:13px;height:13px;color:#4a4a4a">5</div>
<div class="a" style="left:905.5px;top:122px;width:1px;height:5px;background:#8a8a8a"></div>
<div class="a" style="left:899.3px;top:124px;width:1px;height:1px;background:#9a9a9a"></div>
<div class="a" style="left:911.7px;top:124px;width:1px;height:1px;background:#9a9a9a"></div>
<div class="t" style="left:908.4px;top:118px;width:20px;text-align:center;font-size:11px;line-height:13px;height:13px;color:#4a4a4a">6</div>
<div class="a" style="left:930.3px;top:122px;width:1px;height:5px;background:#8a8a8a"></div>
<div class="a" style="left:924.1px;top:124px;width:1px;height:1px;background:#9a9a9a"></div>
<div class="a" style="left:936.5px;top:124px;width:1px;height:1px;background:#9a9a9a"></div>
<div class="t" style="left:933.2px;top:118px;width:20px;text-align:center;font-size:11px;line-height:13px;height:13px;color:#4a4a4a">7</div>
<div class="a" style="left:955.1px;top:122px;width:1px;height:5px;background:#8a8a8a"></div>
<div class="a" style="left:948.9px;top:124px;width:1px;height:1px;background:#9a9a9a"></div>
<div class="a" style="left:961.4px;top:124px;width:1px;height:1px;background:#9a9a9a"></div>
<div class="t" style="left:958.1px;top:118px;width:20px;text-align:center;font-size:11px;line-height:13px;height:13px;color:#4a4a4a">8</div>
<div class="a" style="left:980.0px;top:122px;width:1px;height:5px;background:#8a8a8a"></div>
<div class="a" style="left:973.8px;top:124px;width:1px;height:1px;background:#9a9a9a"></div>
<div class="a" style="left:986.2px;top:124px;width:1px;height:1px;background:#9a9a9a"></div>
<div class="t" style="left:982.9px;top:118px;width:20px;text-align:center;font-size:11px;line-height:13px;height:13px;color:#4a4a4a">9</div>
<div class="a" style="left:1004.8px;top:122px;width:1px;height:5px;background:#8a8a8a"></div>
<div class="a" style="left:998.6px;top:124px;width:1px;height:1px;background:#9a9a9a"></div>
<div class="a" style="left:1011.0px;top:124px;width:1px;height:1px;background:#9a9a9a"></div>
<div class="t" style="left:1007.7px;top:118px;width:20px;text-align:center;font-size:11px;line-height:13px;height:13px;color:#4a4a4a">10</div>
<div class="a" style="left:1029.6px;top:122px;width:1px;height:5px;background:#8a8a8a"></div>
<div class="a" style="left:1023.4px;top:124px;width:1px;height:1px;background:#9a9a9a"></div>
<div class="a" style="left:1035.8px;top:124px;width:1px;height:1px;background:#9a9a9a"></div>
<div class="t" style="left:1032.5px;top:118px;width:20px;text-align:center;font-size:11px;line-height:13px;height:13px;color:#4a4a4a">11</div>
<div class="a" style="left:1054.4px;top:122px;width:1px;height:5px;background:#8a8a8a"></div>
<div class="a" style="left:1048.2px;top:124px;width:1px;height:1px;background:#9a9a9a"></div>
<div class="a" style="left:1060.6px;top:124px;width:1px;height:1px;background:#9a9a9a"></div>
<div class="t" style="left:1057.3px;top:118px;width:20px;text-align:center;font-size:11px;line-height:13px;height:13px;color:#4a4a4a">12</div>
<div class="a" style="left:1079.3px;top:122px;width:1px;height:5px;background:#8a8a8a"></div>
<div class="a" style="left:1073.0px;top:124px;width:1px;height:1px;background:#9a9a9a"></div>
<div class="a" style="left:1085.5px;top:124px;width:1px;height:1px;background:#9a9a9a"></div>
<div class="t" style="left:1082.2px;top:118px;width:20px;text-align:center;font-size:11px;line-height:13px;height:13px;color:#4a4a4a">13</div>
<div class="a" style="left:1104.1px;top:122px;width:1px;height:5px;background:#8a8a8a"></div>
<div class="a" style="left:1097.9px;top:124px;width:1px;height:1px;background:#9a9a9a"></div>
<div class="a" style="left:1110.3px;top:124px;width:1px;height:1px;background:#9a9a9a"></div>
<div class="t" style="left:1107.0px;top:118px;width:20px;text-align:center;font-size:11px;line-height:13px;height:13px;color:#4a4a4a">14</div>
<div class="a" style="left:1128.9px;top:122px;width:1px;height:5px;background:#8a8a8a"></div>
<div class="a" style="left:1122.7px;top:124px;width:1px;height:1px;background:#9a9a9a"></div>
<div class="a" style="left:1135.1px;top:124px;width:1px;height:1px;background:#9a9a9a"></div>
<div class="t" style="left:1131.8px;top:118px;width:20px;text-align:center;font-size:11px;line-height:13px;height:13px;color:#4a4a4a">15</div>
<div class="a" style="left:1153.7px;top:122px;width:1px;height:5px;background:#8a8a8a"></div>
<div class="a" style="left:1147.5px;top:124px;width:1px;height:1px;background:#9a9a9a"></div>
<div class="a" style="left:1159.9px;top:124px;width:1px;height:1px;background:#9a9a9a"></div>
<div class="t" style="left:1156.6px;top:118px;width:20px;text-align:center;font-size:11px;line-height:13px;height:13px;color:#4a4a4a">16</div>
<div class="a" style="left:1178.5px;top:122px;width:1px;height:5px;background:#8a8a8a"></div>
<div class="a" style="left:1172.3px;top:124px;width:1px;height:1px;background:#9a9a9a"></div>
<div class="a" style="left:1184.7px;top:124px;width:1px;height:1px;background:#9a9a9a"></div>
<!-- vertical ruler -->
<div class="a" style="left:194px;top:131px;width:12px;height:510px;background:#fff"></div><div class="a" style="left:199px;top:616px;width:3px;height:1px;background:#777"></div><div class="a" style="left:200px;top:610px;width:1px;height:1px;background:#999"></div><div class="a" style="left:200px;top:622px;width:1px;height:1px;background:#999"></div><div class="a" style="left:200px;top:635px;width:1px;height:1px;background:#999"></div><div class="t" style="left:194px;top:622px;width:12px;height:13px;line-height:13px;font-size:11px;color:#4a4a4a;text-align:center;transform:rotate(-90deg)">9</div>
<div class="a" style="left:188px;top:116px;width:1px;height:528px;background:#cdcdcd"></div>
<!-- slide --><div class="a" style="left:349px;top:168px;width:840px;height:1px;background:#d6d6d6"></div>
<div class="a" id="slide" style="left:349px;top:169px;width:840px;height:473px;background:#fff"></div>
<div class="a" style="left:349px;top:642px;width:840px;height:2px;background:#d0d0d0"></div>
<!-- blue logo circles -->
<svg style="left:349px;top:169px" width="80" height="80" viewBox="349 169 80 80">
<circle cx="413" cy="218" r="14.600" fill="#3759b2"></circle>
<circle cx="395" cy="195.600" r="20" fill="#1b3fa6"></circle>
<path d="M399.900 215.400A14.600 14.600 0 0 1 413.900 203.800A20 20 0 0 1 399.900 215.400z" fill="#14359b"></path>
<path d="M349 190 L392 200 L399.900 215.400 Q400.800 222 399.400 229 Q397.800 236 395 241.500 L349 260z" fill="#0e34a0"></path>
</svg>
<!-- title placeholder -->
<div class="a" style="left:438px;top:193px;width:493px;height:42px;border:1px dotted #9a9a9a"></div>
<div class="t j" id="title" style="left: 443.5px; top: 191px; font-size: 35.2px; line-height: 42px; height: 42px; color: rgb(0, 0, 0); width: 280.2px;">单击此处添加标题</div>
<div class="a" style="left:438px;top:239.500px;width:744px;height:2px;background:#1f409c"></div>
<svg style="left:1050px;top:197px" width="30" height="28" viewBox="1050 197 30 28">
<circle cx="1057" cy="201.600" r="2.600" fill="#1a6fd0"></circle>
<circle cx="1067.700" cy="203.700" r="2.600" fill="#f39a1f"></circle>
<path d="M1054.500 206q4.500-1.500 6 1.500 1.500 4 -.5 11.500l-4.500-.500q1.500-4 .5-7.500-.5-2.500-1.500-5z" fill="#1a5fc0"></path>
<path d="M1062.500 214q1.500-7 7-6 4.500 1.500 6 7.500-6.500-2.500-13 0z" fill="#ef7a1c"></path>
<path d="M1062.300 213.500q1-5 4.500-5.500-1.500 3-1 6z" fill="#f6b21e"></path>
<path d="M1052 217.500q7 3 12 .5 6-3 12-.5-6 0-10 3.500-6 3.500-14-3.500z" fill="#1450a8"></path>
</svg>
<div class="t j" style="left: 1079px; top: 199px; font-size: 16px; line-height: 22px; height: 22px; font-weight: bold; color: rgb(28, 111, 204); letter-spacing: 0.2px; -webkit-text-stroke: 0.5px rgb(28, 111, 204); width: 48.9px;">读书屋</div>
<div class="a" style="left:1134px;top:200px;width:1px;height:19px;background:#8c8c8c"></div>
<div class="t" style="left:1143.500px;top:196px;font-size:13px;line-height:16px;height:16px;font-weight:bold;color:#2e2e2e;letter-spacing:.2px">office</div>
<div class="t j" style="left: 1143.5px; top: 210px; font-size: 9px; line-height: 12px; height: 12px; font-weight: bold; color: rgb(46, 46, 46); width: 36.2px;">教学平台</div>

<!-- footer bar -->
<div class="a" style="left:349px;top:608.500px;width:840px;height:33px;background:#062e98"></div>
<div class="t w j" style="left: 363.5px; top: 613.5px; letter-spacing: 0.5px; font-weight: bold; font-size: 17.4px; line-height: 22px; height: 22px; width: 105.2px;">制作人：陈飞</div>
<!-- guides -->
<div class="a" style="left:769px;top:135px;width:1px;height:509px;background:repeating-linear-gradient(180deg,#b2b2b2 0,#b2b2b2 2px,transparent 2px,transparent 4.300px)"></div>
<div class="a" style="left:395px;top:406px;width:799px;height:1px;background:repeating-linear-gradient(90deg,#c8c8c8 0,#c8c8c8 2.500px,transparent 2.500px,transparent 4.300px)"></div>
<svg style="left:1050px;top:602px" width="40" height="40" viewBox="1050 602 40 40">
<path d="M1051.800 608.500l14.600-1.200v13.600h-14.600z" fill="#f2602a"></path>
<path d="M1067.900 607.200l19.100-3v16.700h-19.100z" fill="#8dbe14"></path>
<path d="M1051.800 622.600h14.600v13.400l-14.600-1.500z" fill="#10a8ea"></path>
<path d="M1067.900 622.600h19.100v16.700l-19.100-3.100z" fill="#fcc40c"></path>
</svg>
<div class="t j" style="left: 1090px; top: 608px; font-size: 11.5px; line-height: 15px; height: 15px; font-weight: bold; color: rgb(29, 158, 226); width: 96.2px;">电脑软硬件教程网</div>
<svg id="wmurl" style="left:1096px;top:623px" width="91" height="13" viewBox="0 0 91 13"><text x="0" y="10" textLength="89.900" lengthAdjust="spacingAndGlyphs" font-family="Liberation Sans, sans-serif" font-weight="bold" font-size="8.500" fill="#f0722a">www.computer26.com</text></svg>
<div class="t w" style="left:1146.500px;top:614px;font-size:18px;line-height:22px;height:22px">3</div>
<div class="a" style="left:1189px;top:131px;width:5px;height:513px;background:#dedede"></div>


<div class="a" id="dd" style="left:111px;top:97px;width:284px;height:511px;background:#fff;border:1px solid #cfcfcf;border-right:2px solid #d6d6d6;box-shadow:0 1px 4px rgba(0,0,0,.2)"></div>
<div class="a" style="left:112px;top:98px;width:282px;height:19px;background:#ebebeb"></div>
<div class="t j" style="left: 120px; top: 100px; font-weight: bold; color: rgb(74, 74, 74); font-size: 11px; width: 56.5px;">Office 主题</div>
<div class="a" style="left:112px;top:287px;width:95px;height:86px;background:#c6c6c6"></div>
<div class="th" style="left:115px;top:121px;border-color:#9c9c9c"><div class="dz" style="left:11.5px;top:7.5px;width:64px;height:30px"></div><div class="a" style="left:11.5px;top:25.0px;width:64px;height:0;border-top:1px dotted #555"></div></div>
<div class="th" style="left:209px;top:121px;border-color:#9c9c9c"><div class="dz" style="left:6.5px;top:3px;width:73px;height:40px"></div><div class="a" style="left:6.5px;top:13px;width:73px;height:0;border-top:1px dotted #555"></div><svg style="left:26.5px;top:22px" width="32" height="12" viewBox="0 0 32 12"><rect x="0.5" y="1" width="7" height="8" fill="#e4e4e4" stroke="#bdbdbd" stroke-width=".6"></rect><rect x="9" y="2.5" width="2" height="6.5" fill="#3a6fc4"></rect><rect x="11.5" y="1" width="2" height="8" fill="#e8b93c"></rect><rect x="14" y="4" width="2" height="5" fill="#8aa"></rect><rect x="17.5" y="1.5" width="6" height="3" fill="#dfe9df" stroke="#9ab09a" stroke-width=".5"></rect><rect x="17.5" y="6" width="6" height="3" fill="#e9e9e9" stroke="#bbb" stroke-width=".5"></rect><circle cx="28" cy="5" r="3.3" fill="#6fa3dd"></circle><path d="M25.5 8.5q2 2 4.5-.5" stroke="#2f62b0" stroke-width="1.2" fill="none"></path><rect x="0" y="10" width="15" height="1" fill="#c9dcf0"></rect></svg></div>
<div class="th" style="left:303px;top:121px;border-color:#9c9c9c"><div class="dz" style="left:7.0px;top:12px;width:72px;height:31px"></div><div class="a" style="left:7.0px;top:32px;width:72px;height:0;border-top:1px dotted #555"></div></div>
<div class="th" style="left:115px;top:206px;border-color:#9c9c9c"><div class="dz" style="left:6.5px;top:2.5px;width:73px;height:41px"></div><div class="a" style="left:6.5px;top:12.5px;width:73px;height:0;border-top:1px dotted #555"></div><div class="a" style="left:43.0px;top:12.5px;width:0;height:31px;border-left:1px dotted #555"></div><svg style="left:9.0px;top:21.5px" width="32" height="12" viewBox="0 0 32 12"><rect x="0.5" y="1" width="7" height="8" fill="#e4e4e4" stroke="#bdbdbd" stroke-width=".6"></rect><rect x="9" y="2.5" width="2" height="6.5" fill="#3a6fc4"></rect><rect x="11.5" y="1" width="2" height="8" fill="#e8b93c"></rect><rect x="14" y="4" width="2" height="5" fill="#8aa"></rect><rect x="17.5" y="1.5" width="6" height="3" fill="#dfe9df" stroke="#9ab09a" stroke-width=".5"></rect><rect x="17.5" y="6" width="6" height="3" fill="#e9e9e9" stroke="#bbb" stroke-width=".5"></rect><circle cx="28" cy="5" r="3.3" fill="#6fa3dd"></circle><path d="M25.5 8.5q2 2 4.5-.5" stroke="#2f62b0" stroke-width="1.2" fill="none"></path><rect x="0" y="10" width="15" height="1" fill="#c9dcf0"></rect></svg><svg style="left:45.5px;top:21.5px" width="32" height="12" viewBox="0 0 32 12"><rect x="0.5" y="1" width="7" height="8" fill="#e4e4e4" stroke="#bdbdbd" stroke-width=".6"></rect><rect x="9" y="2.5" width="2" height="6.5" fill="#3a6fc4"></rect><rect x="11.5" y="1" width="2" height="8" fill="#e8b93c"></rect><rect x="14" y="4" width="2" height="5" fill="#8aa"></rect><rect x="17.5" y="1.5" width="6" height="3" fill="#dfe9df" stroke="#9ab09a" stroke-width=".5"></rect><rect x="17.5" y="6" width="6" height="3" fill="#e9e9e9" stroke="#bbb" stroke-width=".5"></rect><circle cx="28" cy="5" r="3.3" fill="#6fa3dd"></circle><path d="M25.5 8.5q2 2 4.5-.5" stroke="#2f62b0" stroke-width="1.2" fill="none"></path><rect x="0" y="10" width="15" height="1" fill="#c9dcf0"></rect></svg></div>
<div class="th" style="left:209px;top:206px;border-color:#9c9c9c"><div class="dz" style="left:6.5px;top:2.5px;width:73px;height:41px"></div><div class="a" style="left:6.5px;top:12.0px;width:73px;height:0;border-top:1px dotted #555"></div><div class="a" style="left:6.5px;top:18.0px;width:73px;height:0;border-top:1px dotted #555"></div><div class="a" style="left:43.0px;top:12.0px;width:0;height:31px;border-left:1px dotted #555"></div><svg style="left:9.0px;top:23.5px" width="32" height="12" viewBox="0 0 32 12"><rect x="0.5" y="1" width="7" height="8" fill="#e4e4e4" stroke="#bdbdbd" stroke-width=".6"></rect><rect x="9" y="2.5" width="2" height="6.5" fill="#3a6fc4"></rect><rect x="11.5" y="1" width="2" height="8" fill="#e8b93c"></rect><rect x="14" y="4" width="2" height="5" fill="#8aa"></rect><rect x="17.5" y="1.5" width="6" height="3" fill="#dfe9df" stroke="#9ab09a" stroke-width=".5"></rect><rect x="17.5" y="6" width="6" height="3" fill="#e9e9e9" stroke="#bbb" stroke-width=".5"></rect><circle cx="28" cy="5" r="3.3" fill="#6fa3dd"></circle><path d="M25.5 8.5q2 2 4.5-.5" stroke="#2f62b0" stroke-width="1.2" fill="none"></path><rect x="0" y="10" width="15" height="1" fill="#c9dcf0"></rect></svg><svg style="left:45.5px;top:23.5px" width="32" height="12" viewBox="0 0 32 12"><rect x="0.5" y="1" width="7" height="8" fill="#e4e4e4" stroke="#bdbdbd" stroke-width=".6"></rect><rect x="9" y="2.5" width="2" height="6.5" fill="#3a6fc4"></rect><rect x="11.5" y="1" width="2" height="8" fill="#e8b93c"></rect><rect x="14" y="4" width="2" height="5" fill="#8aa"></rect><rect x="17.5" y="1.5" width="6" height="3" fill="#dfe9df" stroke="#9ab09a" stroke-width=".5"></rect><rect x="17.5" y="6" width="6" height="3" fill="#e9e9e9" stroke="#bbb" stroke-width=".5"></rect><circle cx="28" cy="5" r="3.3" fill="#6fa3dd"></circle><path d="M25.5 8.5q2 2 4.5-.5" stroke="#2f62b0" stroke-width="1.2" fill="none"></path><rect x="0" y="10" width="15" height="1" fill="#c9dcf0"></rect></svg></div>
<div class="th" style="left:115px;top:290px;width:89px;height:52px;border:2px solid #a2a2a2"><div class="a" style="left:0;top:43.500px;width:85px;height:4.500px;background:#032b91"></div><div class="a" style="left:10px;top:7px;width:75px;height:1px;background:#3c5fb8"></div><div class="a" style="left:10px;top:3px;width:51px;height:5px;border:1px dotted #999;border-bottom:0"></div><svg style="left:1px;top:1px" width="9" height="8" viewBox="0 0 9 8"><circle cx="3" cy="5" r="2.8" fill="#0b2f9a"></circle><circle cx="5" cy="2.6" r="2.2" fill="#1a3fa3"></circle><circle cx="7" cy="4.6" r="1.5" fill="#3457ad"></circle></svg><div class="a" style="left:71px;top:4px;width:13px;height:2px;background:#8fa3d0"></div></div>
<div class="th" style="left:210px;top:290px;height:50px;border-color:#8f8f8f"></div>
<div class="th" style="left:115px;top:377px;border-color:#9c9c9c"><div class="dz" style="left:6.5px;top:3.5px;width:28px;height:39px"></div><div class="a" style="left:6.5px;top:15.5px;width:28px;height:0;border-top:1px dotted #555"></div><div class="dz" style="left:37.0px;top:7.0px;width:43px;height:35.5px"></div><svg style="left:42.5px;top:17.5px" width="32" height="12" viewBox="0 0 32 12"><rect x="0.5" y="1" width="7" height="8" fill="#e4e4e4" stroke="#bdbdbd" stroke-width=".6"></rect><rect x="9" y="2.5" width="2" height="6.5" fill="#3a6fc4"></rect><rect x="11.5" y="1" width="2" height="8" fill="#e8b93c"></rect><rect x="14" y="4" width="2" height="5" fill="#8aa"></rect><rect x="17.5" y="1.5" width="6" height="3" fill="#dfe9df" stroke="#9ab09a" stroke-width=".5"></rect><rect x="17.5" y="6" width="6" height="3" fill="#e9e9e9" stroke="#bbb" stroke-width=".5"></rect><circle cx="28" cy="5" r="3.3" fill="#6fa3dd"></circle><path d="M25.5 8.5q2 2 4.5-.5" stroke="#2f62b0" stroke-width="1.2" fill="none"></path><rect x="0" y="10" width="15" height="1" fill="#c9dcf0"></rect></svg></div>
<div class="th" style="left:209px;top:377px;border-color:#9c9c9c"><div class="dz" style="left:6.5px;top:3.5px;width:28px;height:39px"></div><div class="a" style="left:6.5px;top:15.5px;width:28px;height:0;border-top:1px dotted #555"></div><div class="dz" style="left:37.0px;top:7.0px;width:43px;height:35.5px"></div><div class="a" style="left:54.5px;top:21.5px;width:8px;height:6px;background:#e8e8e8;border:1px solid #c8c8c8"></div></div>
<div class="th" style="left:303px;top:377px;border-color:#9c9c9c"><div class="dz" style="left:6.5px;top:2.5px;width:73px;height:42px"></div><div class="a" style="left:6.5px;top:13.0px;width:73px;height:0;border-top:1px dotted #555"></div></div>
<div class="th" style="left:115px;top:462px;border-color:#9c9c9c"><div class="dz" style="left:6.5px;top:2.5px;width:73px;height:41px"></div><div class="a" style="left:60.5px;top:2.5px;width:0;height:41px;border-left:1px dotted #555"></div></div>
<div class="lb j" style="left: 132.8px; top: 170.7px; color: rgb(85, 85, 85); width: 52.3px;">标题幻灯片</div>
<div class="lb j" style="left: 226.8px; top: 170.7px; color: rgb(85, 85, 85); width: 52.3px;">标题和内容</div>
<div class="lb j" style="left: 331.3px; top: 170.7px; color: rgb(85, 85, 85); width: 31.5px;">节标题</div>
<div class="lb j" style="left: 138.1px; top: 255.7px; color: rgb(85, 85, 85); width: 41.9px;">两栏内容</div>
<div class="lb j" style="left: 242.4px; top: 255.7px; color: rgb(85, 85, 85); width: 21.1px;">比较</div>
<div class="lb j" style="left: 143.8px; top: 341.2px; color: rgb(58, 58, 58); width: 31.5px;">仅标题</div>
<div class="lb j" style="left: 242.4px; top: 340.7px; color: rgb(85, 85, 85); width: 21.1px;">空白</div>
<div class="lb j" style="left: 132.8px; top: 427px; color: rgb(85, 85, 85); width: 52.3px;">内容与标题</div>
<div class="lb j" style="left: 226.8px; top: 427px; color: rgb(85, 85, 85); width: 52.3px;">图片与标题</div>
<div class="lb j" style="left: 310.4px; top: 427px; color: rgb(85, 85, 85); width: 73.1px;">标题和竖排文字</div>
<div class="lb j" style="left: 122.4px; top: 511.8px; color: rgb(85, 85, 85); width: 73.1px;">竖排标题与文本</div>
<div class="a" style="left:112px;top:542px;width:282px;height:1px;background:#e1e1e1"></div>
<div class="t j" style="left: 139.5px; top: 548px; color: rgb(68, 68, 68); letter-spacing: -0.4px; width: 88.5px;">复制选定幻灯片(<u>D</u>)</div>
<div class="t j" style="left: 139.5px; top: 569px; color: rgb(68, 68, 68); letter-spacing: -0.4px; width: 90.6px;">幻灯片(从大纲)(<u>L</u>)...</div>
<div class="t j" style="left: 139.5px; top: 590px; color: rgb(68, 68, 68); letter-spacing: -0.4px; width: 75.3px;">重用幻灯片(<u>R</u>)...</div>
<svg style="left:115px;top:547px" width="15" height="15" viewBox="0 0 15 15"><rect x="1" y="1" width="3" height="3" fill="#e8c06a"></rect><path d="M4.5 2.5h7v3" fill="none" stroke="#8a8a8a"></path><rect x="3.5" y="5.500" width="10" height="8" fill="#f4f4f4" stroke="#8a8a8a"></rect><rect x="6" y="8" width="5" height="3" fill="#d9d9d9"></rect></svg>
<svg style="left:115px;top:568px" width="15" height="15" viewBox="0 0 15 15"><rect x="0.5" y="0.500" width="8" height="8" fill="#f4f4f4" stroke="#8a8a8a"></rect><rect x="3.5" y="4.500" width="10" height="8" fill="#f4f4f4" stroke="#8a8a8a"></rect><rect x="6" y="7" width="5" height="3" fill="#d9d9d9"></rect></svg>
<svg style="left:115px;top:589px" width="15" height="15" viewBox="0 0 15 15"><rect x="1" y="1" width="4" height="4" fill="#e8d08a"></rect><rect x="2.5" y="4.500" width="10" height="8" fill="#f4f4f4" stroke="#9a9a9a"></rect><rect x="5" y="7" width="5" height="3" fill="#d9d9d9"></rect></svg>
<div class="a" style="left:176px;top:347.5px;width:18px;height:18px;border-radius:9px;background:#f1363f;color:#fff;font-size:12px;line-height:18px;text-align:center">2</div>
<div class="a" style="left:137.800px;top:80.500px;width:17.500px;height:17.500px;border-radius:9px;background:#f1363f;color:#fff;font-size:11.500px;line-height:17.500px;text-align:center">1</div>

</body></html>
